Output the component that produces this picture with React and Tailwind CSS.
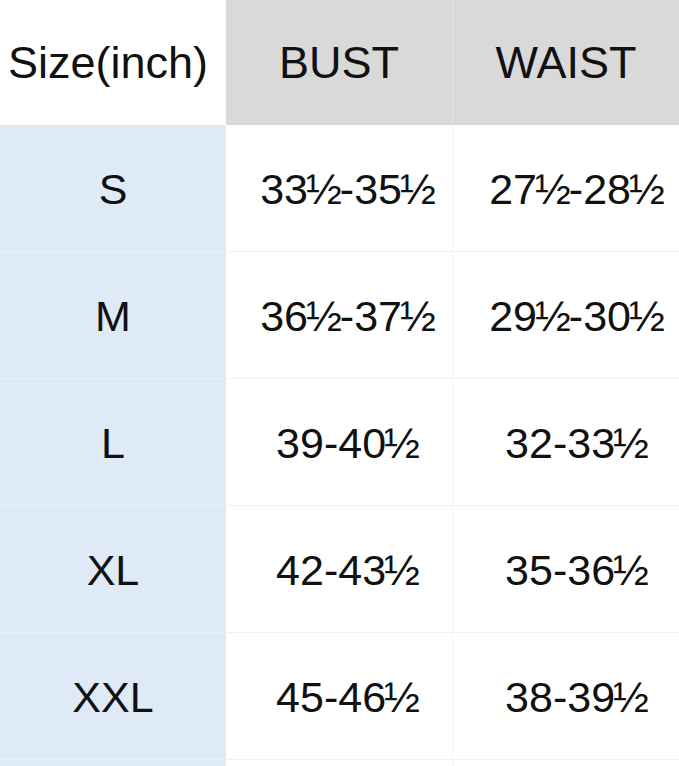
const ROWS = [
  { size: 'S', bust: '33½-35½', waist: '27½-28½' },
  { size: 'M', bust: '36½-37½', waist: '29½-30½' },
  { size: 'L', bust: '39-40½', waist: '32-33½' },
  { size: 'XL', bust: '42-43½', waist: '35-36½' },
  { size: 'XXL', bust: '45-46½', waist: '38-39½' },
];

const cell = 'flex items-center justify-center';

// the half glyph sits a little tighter in the chart
function Value({ text }) {
  return (
    <span className="pt-[3px] whitespace-nowrap">
      {text.split('½').map((part, i, arr) => (
        <span key={i}>
          {part}
          {i < arr.length - 1 && <span className="-mx-[2px]">½</span>}
        </span>
      ))}
    </span>
  );
}

export default function App() {
  return (
    <div
      className="w-[679px] h-[766px] overflow-hidden bg-white text-[43px] leading-none text-[#111]"
      style={{ fontFamily: '"Liberation Sans", Arial, sans-serif' }}
    >
      <div className="flex h-[125px] text-[45px]">
        <div className={`${cell} w-[226px] bg-white pr-[10px]`}>Size(inch)</div>
        <div className={`${cell} w-[227px] bg-[#d9d9d9] border-r border-[#e6e6e6]`}>BUST</div>
        <div className={`${cell} flex-1 bg-[#d9d9d9]`}>WAIST</div>
      </div>

      {ROWS.map((row) => (
        <div key={row.size} className="flex h-[127px]">
          <div className={`${cell} w-[226px] pt-[3px] bg-[#deeaf6] border-b border-[#e8f0f9]`}>{row.size}</div>
          <div className={`${cell} w-[227px] pl-[16px] border-b border-r border-[#f1f1f1]`}>
            <Value text={row.bust} />
          </div>
          <div className={`${cell} flex-1 pl-[20px] border-b border-[#f1f1f1]`}>
            <Value text={row.waist} />
          </div>
        </div>
      ))}

      <div className="flex h-[10px]">
        <div className="w-[226px] bg-[#deeaf6]" />
        <div className="w-[227px] border-r border-[#f1f1f1]" />
        <div className="flex-1" />
      </div>
    </div>
  );
}
